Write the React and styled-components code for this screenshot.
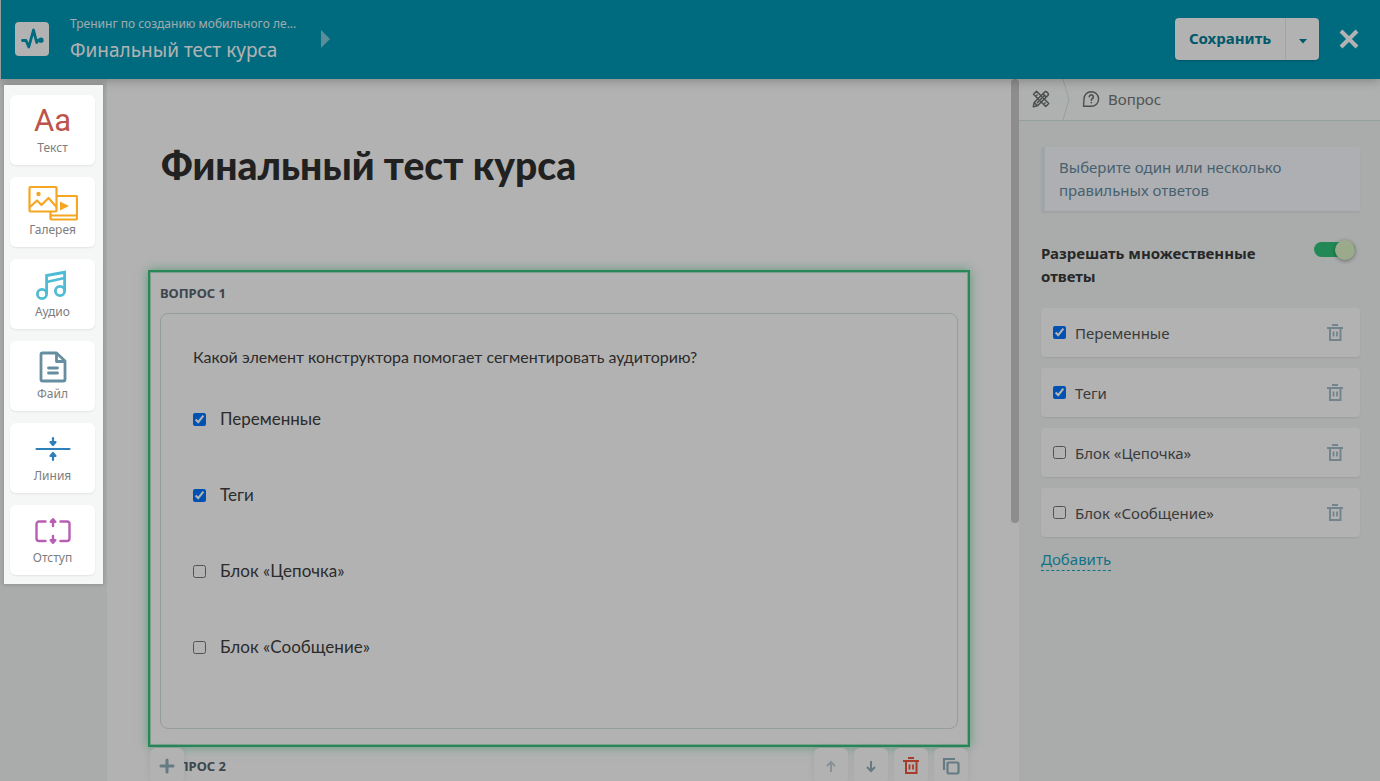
import React, { useState } from 'react'
import styled, { createGlobalStyle } from 'styled-components';

const GlobalStyle = createGlobalStyle`
    * {
        box-sizing: border-box;
    }
    body {
        margin: 0;
        font-family: "Noto Sans", "Open Sans", sans-serif;
        font-size: 15px;
        color: #555;
        overflow: hidden;
    }
    button {
        font-family: inherit;
        padding: 0;
        border: none;
        cursor: pointer;
    }
    h1, h2, p {
        margin: 0;
    }
    svg {
        display: block;
    }
`

const LogoIcon = () => (
    <svg width="34" height="34" viewBox="0 0 34 34" fill="none">
        <path d="M7.500 18.500h3.500l2.800 6.500 4.700-17 3.200 12.500 1.300-2.300h3" stroke="#0099b7" strokeWidth="2.800" strokeLinecap="round" strokeLinejoin="round" />
        <circle cx="26" cy="18.200" r="2.600" fill="#0099b7" />
    </svg>
)

const TrashIcon = () => (
    <svg width="18" height="18" viewBox="0 0 18 18" fill="none" stroke="currentColor">
        <path d="M6 1h6" strokeWidth="2" />
        <path d="M1 4h16M4 4v12h10.500V4" strokeWidth="2" />
        <path d="M7.500 7.500v5M11 7.500v5" strokeWidth="1.800" />
    </svg>
)

const GalleryIcon = () => (
    <svg width="50" height="36" viewBox="0 0 50 36" fill="none" stroke="#f5a623" strokeWidth="2.200" strokeLinejoin="round">
        <rect x="1.500" y="2" width="27" height="24.500" rx="1" />
        <path d="M2 22l7-6.500 4.500 4.500 7-7 8 9" />
        <circle cx="10.500" cy="9" r="2.200" fill="#f5a623" stroke="none" />
        <path d="M28.500 11H48a1 1 0 0 1 1 1v21.500a1 1 0 0 1-1 1H23.500a1 1 0 0 1-1-1v-7M23 30.500h26" />
        <path d="M32 16.500v9l9-4.500z" fill="#f5a623" stroke="none" />
    </svg>
)

const AudioIcon = () => (
    <svg width="34" height="32" viewBox="0 0 34 32" fill="none" stroke="#4fbcd6" strokeWidth="2.800">
        <circle cx="6" cy="25" r="4.600" />
        <circle cx="24" cy="22" r="4.600" />
        <path d="M10.600 25V6.500L30 3M28.600 22V2M10.600 13l18-4" />
    </svg>
)

const FileIcon = () => (
    <svg width="28" height="32" viewBox="0 0 28 32" fill="none" stroke="#658fa0" strokeWidth="2.800" strokeLinejoin="round">
        <path d="M17.500 2H3.500A1.500 1.500 0 0 0 2 3.500v25A1.500 1.500 0 0 0 3.500 30h21a1.500 1.500 0 0 0 1.500-1.500V10z" />
        <path d="M17.500 2v8.500H26" />
        <path d="M9.500 17h9M9.500 22h9" strokeLinecap="round" />
    </svg>
)

const LineIcon = () => (
    <svg width="36" height="26" viewBox="0 0 36 26" fill="none" stroke="#2f80ba" strokeWidth="2.200" strokeLinecap="round">
        <path d="M1.500 13h33" />
        <path d="M18 2v4M18 24v-4" />
        <path d="M15.500 6h5L18 9zM15.500 20h5L18 17z" fill="#2f80ba" strokeLinejoin="round" />
    </svg>
)

const IndentIcon = () => (
    <svg width="36" height="28" viewBox="0 0 36 28" fill="none" stroke="#b75fb3" strokeWidth="2.400" strokeLinecap="round" strokeLinejoin="round">
        <path d="M10.500 4.500H4A2.500 2.500 0 0 0 1.500 7v14.500A2.500 2.500 0 0 0 4 24h6.500M25.500 4.500H32A2.500 2.500 0 0 1 34.500 7v14.500A2.500 2.500 0 0 1 32 24h-6.500" />
        <path d="M18 5v4M18 19v4" />
        <path d="M15.500 5h5L18 2zM15.500 23h5L18 26z" fill="#b75fb3" strokeWidth="2" />
    </svg>
)

const ToolsIcon = () => (
    <svg width="18" height="18" viewBox="0 0 18 18" fill="none" stroke="#6b7070" strokeWidth="1.500" strokeLinejoin="round">
        <path d="M7 9.800L1.500 4.300l3-3L10 6.800M11.200 8l5.500 5.500-3 3L8.200 11M5.500 4.500L4.300 5.700M13.500 12.500l-1.200 1.200" />
        <path d="M1.300 16.700l.9-4.200L12.500 2.200a1.800 1.800 0 0 1 2.500 0l.8.800a1.800 1.800 0 0 1 0 2.500L5.500 15.800zM11 3.700L14.300 7M2.200 12.500l3.300 3.300M5 13l7.500-7.500" />
    </svg>
)

const QuestionIcon = () => (
    <svg width="18" height="18" viewBox="0 0 18 18" fill="none" stroke="#6b7070" strokeWidth="1.400" strokeLinecap="round" strokeLinejoin="round">
        <path d="M1.500 16.300L2 9a7.300 7.300 0 1 1 7.300 7.300z" />
        <path d="M7.300 6.800a2 2 0 1 1 3 1.800c-.8.500-1 .9-1 1.600M9.300 12.600v.1" strokeWidth="1.600" />
    </svg>
)

const CrumbArrow = () => (
    <svg width="10" height="41" viewBox="0 0 10 41" fill="none" stroke="#d5e5e6">
        <path d="M2 0l6 20.500-6 20.500" />
    </svg>
)

const PlusIcon = () => (
    <svg width="16" height="16" viewBox="0 0 16 16" stroke="#92afbc" strokeWidth="3" strokeLinecap="round">
        <path d="M8 2v12M2 8h12" />
    </svg>
)

const ArrowIcon = ({ down }) => (
    <svg width="14" height="14" viewBox="0 0 14 14" fill="none" stroke="currentColor" strokeWidth="2">
        <path d={down ? 'M7 2v10M3 8l4 4 4-4' : 'M7 13V3M3 7l4-4 4 4'} />
    </svg>
)

const CopyIcon = () => (
    <svg width="18" height="18" viewBox="0 0 18 18" fill="none" stroke="currentColor" strokeWidth="2.200">
        <rect x="5.500" y="5.500" width="11" height="11" rx="1" />
        <path d="M2 13V2h11" />
    </svg>
)

const tools = [
    { name: 'Текст', icon: null },
    { name: 'Галерея', icon: <GalleryIcon /> },
    { name: 'Аудио', icon: <AudioIcon /> },
    { name: 'Файл', icon: <FileIcon /> },
    { name: 'Линия', icon: <LineIcon /> },
    { name: 'Отступ', icon: <IndentIcon /> },
]

function App() {
    const [multiple, setMultiple] = useState(true);
    const [answers, setAnswers] = useState([
        { text: 'Переменные', right: true },
        { text: 'Теги', right: true },
        { text: 'Блок «Цепочка»', right: false },
        { text: 'Блок «Сообщение»', right: false },
    ]);

    const toggle = (index) => {
        setAnswers(answers.map((a, i) => i === index ? { ...a, right: !a.right } : a));
    }

    const remove = (index) => {
        setAnswers(answers.filter((a, i) => i !== index));
    }

    return (
        <Page>
            <GlobalStyle />
            <Header>
                <Logo href="#" aria-label="На главную"><LogoIcon /></Logo>
                <Crumbs>
                    <Course href="#">Тренинг по созданию мобильного ле...</Course>
                    <Lesson>Финальный тест курса</Lesson>
                </Crumbs>
                <Next aria-label="Далее">
                    <svg width="9" height="18" viewBox="0 0 9 18"><path d="M0 0l9 9-9 9z" fill="#80ccdb" /></svg>
                </Next>
                <SaveGroup>
                    <Save>Сохранить</Save>
                    <SaveMore aria-label="Ещё">
                        <svg width="8" height="5" viewBox="0 0 8 5"><path d="M0 0h8L4 4.500z" fill="#007f99" /></svg>
                    </SaveMore>
                </SaveGroup>
                <Close aria-label="Закрыть">
                    <svg width="20" height="20" viewBox="0 0 20 20" stroke="#fff" strokeWidth="4"><path d="M2 2l16 16M18 2L2 18" /></svg>
                </Close>
            </Header>
            <Body>
                <Sidebar>
                    <Palette>
                        {tools.map((tool) => (
                            <Tool key={tool.name}>
                                <ToolIcon>{tool.icon || <Letters>Aa</Letters>}</ToolIcon>
                                {tool.name}
                            </Tool>
                        ))}
                    </Palette>
                </Sidebar>
                <Canvas>
                    <Title>Финальный тест курса</Title>
                    <Block>
                        <BlockLabel>ВОПРОС 1</BlockLabel>
                        <Question>
                            <QuestionText>Какой элемент конструктора помогает сегментировать аудиторию?</QuestionText>
                            {answers.map((a, i) => (
                                <Option key={a.text}>
                                    <Check type="checkbox" checked={a.right} onChange={() => toggle(i)} />
                                    {a.text}
                                </Option>
                            ))}
                        </Question>
                    </Block>
                    <NextBlock>
                        <BlockLabel>ВОПРОС 2</BlockLabel>
                        <BlockTools>
                            <BlockButton aria-label="Добавить блок" $first><PlusIcon /></BlockButton>
                            <BlockButton aria-label="Вверх" $color="#c3d2d8"><ArrowIcon /></BlockButton>
                            <BlockButton aria-label="Вниз"><ArrowIcon down /></BlockButton>
                            <BlockButton aria-label="Удалить" $color="#f2553d"><TrashIcon /></BlockButton>
                            <BlockButton aria-label="Копировать"><CopyIcon /></BlockButton>
                        </BlockTools>
                    </NextBlock>
                </Canvas>
                <Track><Thumb /></Track>
                <Panel>
                    <Tabs>
                        <Tab aria-label="Оформление"><ToolsIcon /></Tab>
                        <CrumbArrow />
                        <Tab><QuestionIcon />Вопрос</Tab>
                    </Tabs>
                    <Settings>
                        <Notice>Выберите один или несколько правильных ответов</Notice>
                        <SwitchRow>
                            Разрешать множественные ответы
                            <Switch type="checkbox" role="switch" checked={multiple} onChange={() => setMultiple(!multiple)} />
                        </SwitchRow>
                        <Answers>
                            {answers.map((a, i) => (
                                <Answer key={a.text}>
                                    <AnswerLabel>
                                        <Check type="checkbox" checked={a.right} onChange={() => toggle(i)} />
                                        {a.text}
                                    </AnswerLabel>
                                    <Remove aria-label={`Удалить ${a.text}`} onClick={() => remove(i)}><TrashIcon /></Remove>
                                </Answer>
                            ))}
                        </Answers>
                        <Add href="#">Добавить</Add>
                    </Settings>
                </Panel>
            </Body>
        </Page>
    )
}

export default App

const Page = styled.div`
    display: flex;
    flex-direction: column;
    height: 100vh;
    overflow: hidden;
    background-color: #fff;
`
const Header = styled.header`
    position: relative;
    z-index: 1;
    display: flex;
    align-items: center;
    height: 79px;
    flex-shrink: 0;
    padding: 0 21px 1px 14px;
    background-color: #0099b7;
    border-left: 1px solid #d5dfe0;
    box-shadow: 0 2px 10px rgba(0, 0, 0, 0.25);
`
const Logo = styled.a`
    background-color: #fff;
    border-radius: 4px;
`
const Crumbs = styled.div`
    display: flex;
    flex-direction: column;
    width: 251px;
    margin-left: 21px;
    color: #fff;
`
const Course = styled.a`
    font-size: 12px;
    line-height: 22px;
    color: inherit;
    text-decoration: none;
    white-space: nowrap;
    opacity: 0.9;
`
const Lesson = styled.p`
    font-size: 19px;
    line-height: 30px;
    white-space: nowrap;
`
const Next = styled.button`
    background: none;
`
const SaveGroup = styled.div`
    display: flex;
    height: 42px;
    margin-left: auto;
    background-color: #fff;
    border-radius: 4px;
    box-shadow: 0 1px 2px rgba(0, 0, 0, 0.2);
`
const Save = styled.button`
    width: 110px;
    padding-bottom: 2px;
    font-size: 15px;
    font-weight: 700;
    color: #007f99;
    background: none;
`
const SaveMore = styled.button`
    display: flex;
    align-items: center;
    justify-content: center;
    width: 34px;
    padding-top: 4px;
    border-left: 1px solid #e6ebec;
    background: none;
`
const Close = styled.button`
    margin-left: 20px;
    background: none;
`
const Body = styled.div`
    display: flex;
    flex: 1;
    min-height: 0;
`
const Sidebar = styled.aside`
    width: 107px;
    flex-shrink: 0;
    padding: 6px 4px;
    background-color: #f4f7f6;
`
/* the shadow dims the rest of the editor while the tools are highlighted */
const Palette = styled.div`
    position: relative;
    z-index: 2;
    display: flex;
    flex-direction: column;
    gap: 12px;
    padding: 10px 8px 9px 6px;
    background-color: #f4f7f6;
    box-shadow: 0 0 0 3000px rgba(0, 0, 0, 0.3), 0 0 4px 1px rgba(0, 0, 0, 0.15);
`
const Tool = styled.button`
    display: flex;
    flex-direction: column;
    align-items: center;
    height: 70px;
    padding-top: 6px;
    font-size: 12px;
    line-height: 16px;
    color: #7d7d7d;
    background-color: #fff;
    border-radius: 6px;
    box-shadow: 0 1px 2px rgba(0, 0, 0, 0.08);
`
const ToolIcon = styled.span`
    display: flex;
    align-items: center;
    justify-content: center;
    height: 39px;
`
const Letters = styled.span`
    font-family: Roboto, sans-serif;
    font-size: 31px;
    line-height: 32px;
    color: #bd544b;
`
const Canvas = styled.main`
    flex: 1;
    min-width: 0;
    padding: 0 41px;
    background-color: #fff;
`
const Title = styled.h1`
    padding: 62px 13px 81px;
    font-family: Lato, sans-serif;
    font-size: 39px;
    line-height: 48px;
    font-weight: 900;
    color: #303030;
`
const Block = styled.section`
    padding: 9px 10px 16px;
    border: 2px solid #38c27c;
    box-shadow: 0 0 10px rgba(56, 194, 124, 0.6), inset 0 0 0 1px rgba(56, 194, 124, 0.4);
`
const BlockLabel = styled.h2`
    font-size: 13px;
    line-height: 24px;
    font-weight: 700;
    color: #566570;
`
const Question = styled.div`
    margin-top: 8px;
    padding: 28px 32px 43px;
    border: 1px solid #d5e0e0;
    border-radius: 8px;
    font-family: Lato, sans-serif;
    font-size: 17px;
    line-height: 30px;
    color: #404040;
`
const QuestionText = styled.p`
    padding-bottom: 9px;
    font-size: 16px;
`
const Option = styled.label`
    display: flex;
    align-items: center;
    gap: 14px;
    height: 76px;
`
const Check = styled.input`
    width: 13px;
    height: 13px;
    margin: 0;
    flex-shrink: 0;
`
const NextBlock = styled.section`
    position: relative;
    padding: 7px 12px;
`
const BlockTools = styled.div`
    position: absolute;
    top: 1px;
    left: 2px;
    right: 2px;
    display: flex;
    gap: 6px;
`
const BlockButton = styled.button`
    display: flex;
    align-items: center;
    justify-content: center;
    width: 34px;
    height: 36px;
    margin-right: ${(props) => props.$first && "auto"};
    color: ${(props) => props.$color || "#92afbc"};
    background-color: #fff;
    border-radius: 6px;
    box-shadow: 0 0 6px rgba(70, 100, 110, 0.12);
`
const Track = styled.div`
    width: 8px;
    flex-shrink: 0;
`
const Thumb = styled.div`
    height: 444px;
    border-radius: 4px;
    background-color: #cacaca;
`
const Panel = styled.aside`
    width: 361px;
    flex-shrink: 0;
    background-color: #f4f7f6;
`
const Tabs = styled.nav`
    display: flex;
    align-items: center;
    gap: 11px;
    height: 42px;
    padding-left: 13px;
    background-color: #fbfdfd;
    border-bottom: 1px solid #d5e5e6;
`
const Tab = styled.button`
    display: flex;
    align-items: center;
    gap: 8px;
    font-size: 15px;
    line-height: 20px;
    padding-bottom: 2px;
    color: #737878;
    background: none;
`
const Settings = styled.div`
    padding: 26px 20px 0 22px;
`
const Notice = styled.p`
    padding: 9px 14px;
    font-size: 15px;
    line-height: 23px;
    color: #688ba0;
    background-color: #f9fbff;
    border-left: 4px solid #e2eef2;
    border-radius: 2px;
    box-shadow: 0 2px 2px rgba(0, 0, 0, 0.06);
`
const SwitchRow = styled.label`
    display: flex;
    align-items: flex-start;
    justify-content: space-between;
    gap: 50px;
    margin-top: 31px;
    padding-right: 5px;
    font-size: 15px;
    line-height: 23px;
    font-weight: 700;
    color: #3a3a3a;
`
const Switch = styled.input`
    appearance: none;
    display: flex;
    align-items: center;
    width: 41px;
    height: 15px;
    margin: 0;
    flex-shrink: 0;
    border-radius: 8px;
    background-color: ${(props) => props.checked ? "#32c57b" : "#c3cccc"};

    &::before {
        content: "";
        width: 20px;
        height: 20px;
        flex-shrink: 0;
        margin-left: ${(props) => props.checked && "auto"};
        border-radius: 50%;
        background-color: #dff4c8;
        box-shadow: 0 1px 4px rgba(0, 0, 0, 0.4);
    }
`
const Answers = styled.div`
    display: flex;
    flex-direction: column;
    gap: 11px;
    margin-top: 20px;
`
const Answer = styled.div`
    display: flex;
    align-items: center;
    height: 49px;
    padding: 0 16px 0 12px;
    background-color: #fff;
    border-radius: 4px;
    box-shadow: 0 1px 2px rgba(0, 0, 0, 0.08);
`
const AnswerLabel = styled.label`
    display: flex;
    align-items: center;
    gap: 9px;
    flex: 1;
    font-size: 15px;
`
const Remove = styled.button`
    color: #a4bfcb;
    background: none;
`
const Add = styled.a`
    display: inline-block;
    margin-top: 12px;
    font-size: 15px;
    line-height: 21px;
    color: #1aa5c0;
    text-decoration: none;
    border-bottom: 1px dashed #1aa5c0;
`
